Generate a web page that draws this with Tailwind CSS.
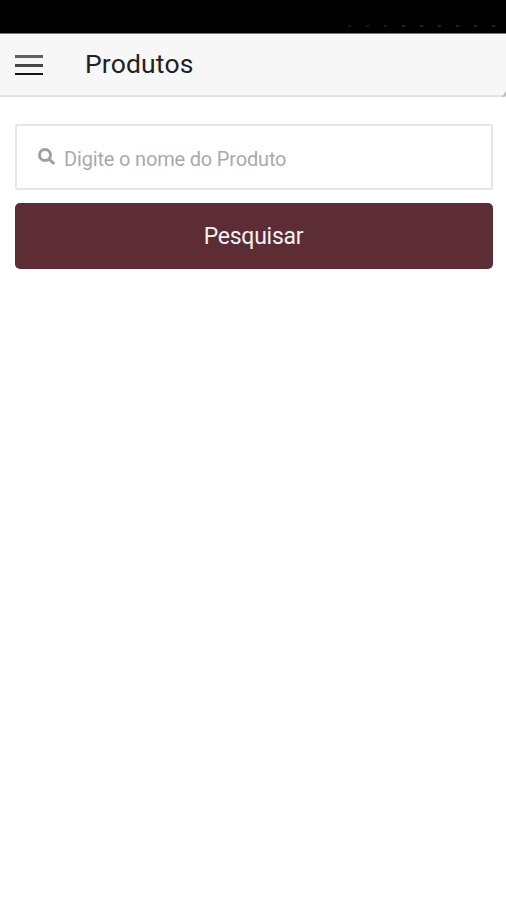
<!DOCTYPE html>
<html lang="pt-BR">
<head>
    <meta charset="UTF-8">
    <meta name="viewport" content="width=device-width, initial-scale=1.0">
    <title>Produtos</title>
    <script src="https://cdn.jsdelivr.net/npm/@tailwindcss/browser@4"></script>
</head>
<body class="bg-white min-h-screen font-['Roboto',sans-serif]">
    <!-- Status bar -->
    <div class="h-[34px] bg-black border-b border-[#777] flex justify-end items-end pr-[11px] pb-[6px] gap-[15px]">
        <span class="w-[3px] h-0.5 bg-[#161616]"></span>
        <span class="w-[3px] h-0.5 bg-[#161616]"></span>
        <span class="w-[3px] h-0.5 bg-[#1a1a1a]"></span>
        <span class="w-[3px] h-0.5 bg-[#242424]"></span>
        <span class="w-[3px] h-0.5 bg-[#242424]"></span>
        <span class="w-[3px] h-0.5 bg-[#202020]"></span>
        <span class="w-[3px] h-0.5 bg-[#242424]"></span>
        <span class="w-[3px] h-0.5 bg-[#202020]"></span>
        <span class="w-[3px] h-0.5 bg-[#242424]"></span>
    </div>

    <header class="relative h-[63px] bg-[#f7f7f7] border-b-2 border-[#e2e2e2] flex items-center pl-[15px]">
        <button aria-label="Menu" class="w-7 h-5 flex flex-col justify-between">
            <span class="block h-[3px] bg-[#606060]"></span>
            <span class="block h-[3px] bg-[#484848]"></span>
            <span class="block h-0.5 bg-[#161616]"></span>
        </button>
        <h1 class="ml-[42px] -mt-px text-[26.5px] leading-none tracking-[0.15px] text-[#222]">Produtos</h1>
        <svg class="absolute right-0 -bottom-0.5 w-1 h-1.5" viewBox="0 0 4 6">
            <path d="M0 6L4 0V4L2 6z" fill="#bbb"/>
        </svg>
    </header>

    <main class="pl-[14.5px] pr-[13.5px] pt-[27px]">
        <label class="h-[66px] border-2 border-[#e6e6e6] rounded-[2px] flex items-center pl-[21.5px]">
            <svg class="w-[18px] h-[18px]" viewBox="0 0 18 18" fill="none" stroke="#a0a0a0" stroke-width="3">
                <circle cx="7" cy="7" r="5.5"/>
                <path d="M10.8 10.8l5.5 5.2"/>
            </svg>
            <input type="text" placeholder="Digite o nome do Produto" class="ml-2 mt-[3px] flex-1 text-[20px] tracking-[-0.17px] outline-none placeholder:text-[#aaa]">
        </label>
        <button class="mt-[13px] pt-[3px] w-full h-[66px] rounded-[5px] bg-[#5c2d35] text-[#f5f0f0] text-[23px] tracking-[-0.25px]">Pesquisar</button>
    </main>
</body>
</html>
